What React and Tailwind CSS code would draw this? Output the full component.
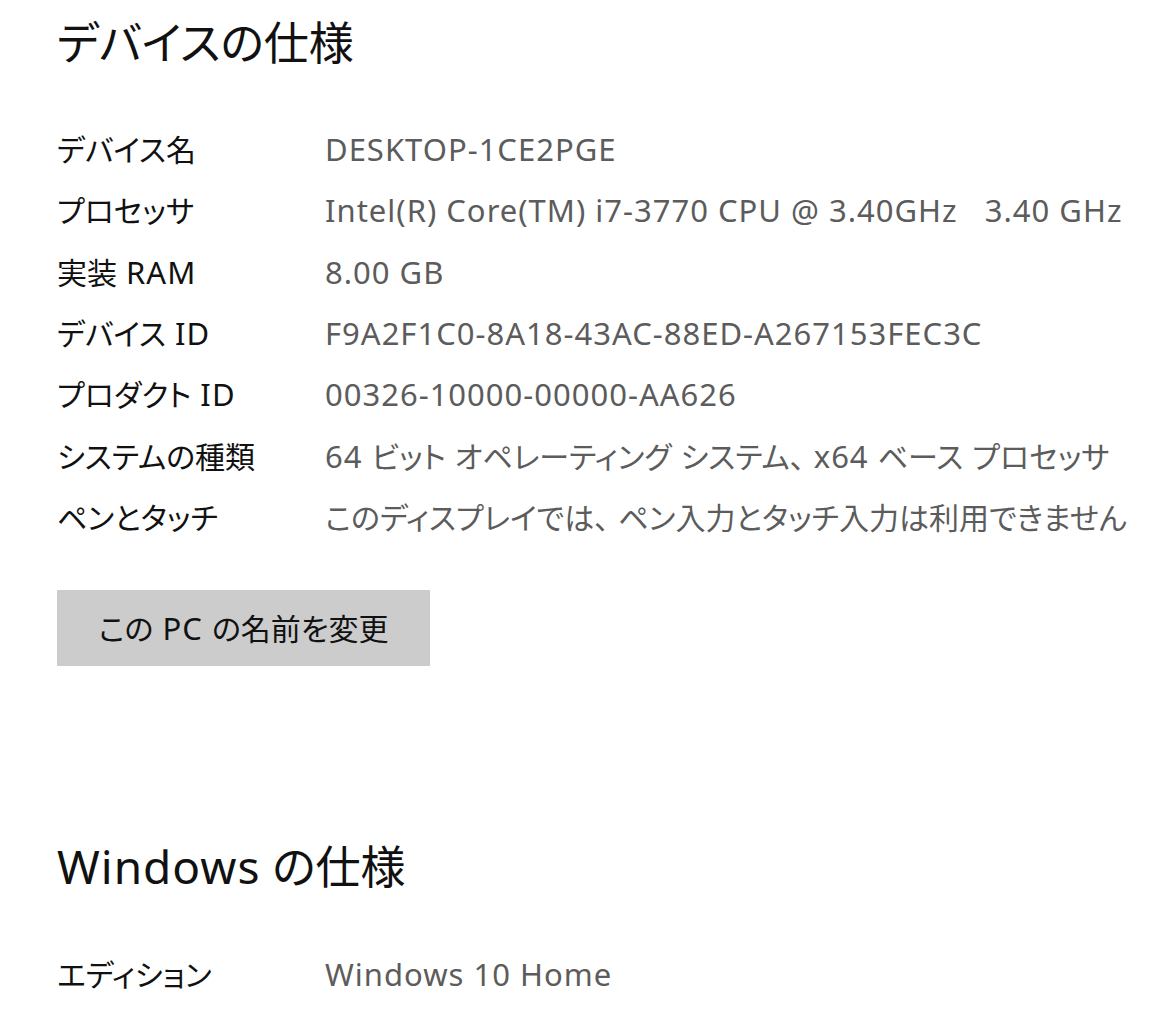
import React from 'react';

const deviceSpecs = [
  ['デバイス名', 'DESKTOP-1CE2PGE'],
  ['プロセッサ', 'Intel(R) Core(TM) i7-3770 CPU @ 3.40GHz\u00a0\u00a0\u00a03.40 GHz'],
  ['実装 RAM', '8.00 GB'],
  ['デバイス ID', 'F9A2F1C0-8A18-43AC-88ED-A267153FEC3C'],
  ['プロダクト ID', '00326-10000-00000-AA626'],
  ['システムの種類', '64 ビット オペレーティング システム、 x64 ベース プロセッサ'],
  ['ペンとタッチ', 'このディスプレイでは、 ペン入力とタッチ入力は利用できません'],
];

const windowsSpecs = [
  ['エディション', 'Windows 10 Home'],
  ['バージョン', '20H2'],
];

// latin runs are set a touch wider, kana/kanji a touch smaller (like Segoe UI + Yu Gothic UI)
function Mixed({ text }) {
  const parts = text.match(/[\x20-\x7e\u00a0]+|[^\x20-\x7e\u00a0]+/g) || [];
  return (
    <span>
      {parts.map((p, i) =>
        /^[\x20-\x7e\u00a0]+$/.test(p) ? (
          <span key={i} className="text-[31px] tracking-[1px]">{p}</span>
        ) : (
          <span key={i} className="text-[30px]">{p}</span>
        )
      )}
    </span>
  );
}

function SpecRow({ label, value }) {
  return (
    <div className="grid grid-cols-[268px_1fr] h-[61.3px] items-center">
      <div className="text-[#111] whitespace-nowrap"><Mixed text={label} /></div>
      <div className="text-[#5c5c5c] whitespace-nowrap"><Mixed text={value} /></div>
    </div>
  );
}

export default function App() {
  return (
    <div
      className="min-h-screen bg-white pl-[57px] pt-[12px] text-[31px] leading-none overflow-hidden"
      style={{ fontFamily: '"Noto Sans", "Noto Sans CJK JP", sans-serif', fontFeatureSettings: '"palt"' }}
    >
      <h1 className="h-[60px] flex items-center text-[45px] font-normal text-[#111]">デバイスの仕様</h1>

      <div className="mt-[47px]">
        {deviceSpecs.map(([label, value]) => (
          <SpecRow key={label} label={label} value={value} />
        ))}
      </div>

      <button className="mt-[42px] w-[373px] h-[76px] bg-[#cccccc] text-[#111] flex items-center justify-center">
        <Mixed text="この PC の名前を変更" />
      </button>

      <h2 className="mt-[170px] h-[60px] flex items-center text-[45px] font-normal text-[#111]">
        <span className="text-[46px] tracking-[1px]">Windows</span>
        <span>&nbsp;の仕様</span>
      </h2>

      <div className="mt-[48px]">
        {windowsSpecs.map(([label, value]) => (
          <SpecRow key={label} label={label} value={value} />
        ))}
      </div>
    </div>
  );
}
